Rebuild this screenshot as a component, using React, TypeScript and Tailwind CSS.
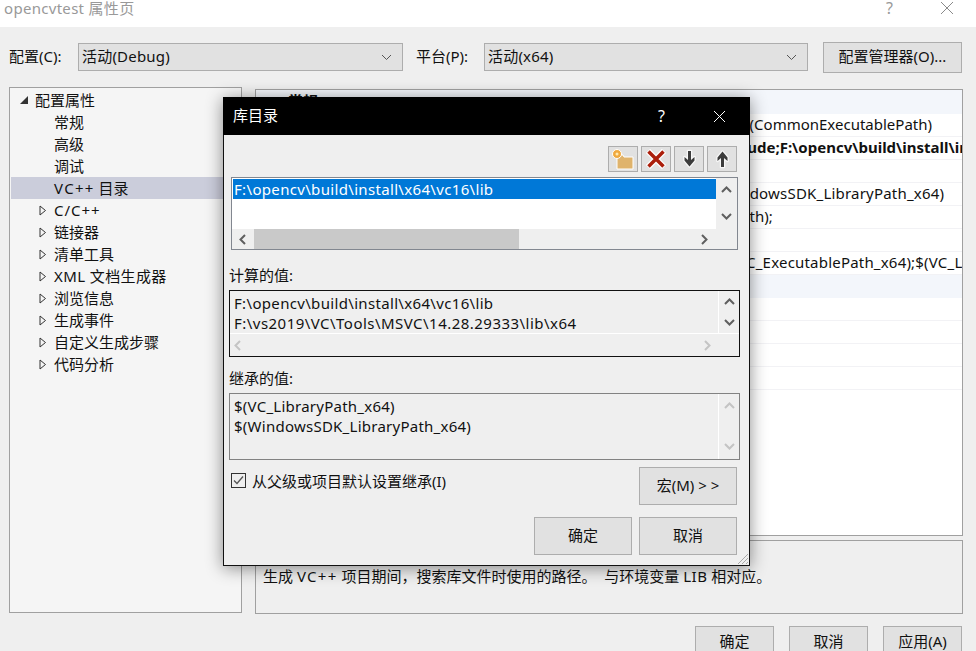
import React from "react";

const treeItems = [
  { label: "C/C++", cls: "tracking-[1px]" },
  { label: "链接器", cls: "" },
  { label: "清单工具", cls: "" },
  { label: "XML 文档生成器", cls: "tracking-[0.4px]" },
  { label: "浏览信息", cls: "" },
  { label: "生成事件", cls: "" },
  { label: "自定义生成步骤", cls: "" },
  { label: "代码分析", cls: "" },
];

const rows = [
  { text: "$(CommonExecutablePath)", cls: "pl-[485px]" },
  { text: "clude;F:\\opencv\\build\\install\\include", cls: "pl-[479px] font-bold" },
  { text: "", cls: "" },
  { text: "WindowsSDK_LibraryPath_x64)", cls: "pl-[466px] tracking-[0.2px]" },
  { text: "Path);", cls: "pl-[476px]" },
  { text: "", cls: "" },
  { text: "VC_ExecutablePath_x64);$(VC_LibraryPath_x64)", cls: "pl-[481px] tracking-[0.2px]" },
];

const Chevron = ({ dir, gray }: { dir: "up" | "down" | "left" | "right"; gray?: boolean }) => {
  const pts = {
    up: "1,7 5.5,2.5 10,7",
    down: "1,3 5.5,7.5 10,3",
    left: "7,1 2.5,5.5 7,10",
    right: "3,1 7.5,5.5 3,10",
  }[dir];
  return (
    <svg width="11" height="11" viewBox="0 0 11 11" fill="none" stroke={gray ? "#c4c4c4" : "#5f5f5f"} strokeWidth="2">
      <polyline points={pts} />
    </svg>
  );
};

const SelectBox = ({ text, cls }: { text: string; cls: string }) => (
  <div className={`h-[28px] border border-[#adadad] bg-[#e1e1e1] flex items-center justify-between pl-[3px] pr-[10px] ${cls}`}>
    <span className="mb-[2px] tracking-[0.2px]">{text}</span>
    <svg width="11" height="7" viewBox="0 0 11 7" fill="none" stroke="#555" strokeWidth="1">
      <polyline points="1,1 5.5,5.5 10,1" />
    </svg>
  </div>
);

const Btn = ({ label, cls }: { label: string; cls: string }) => (
  <div className={`border border-[#adadad] bg-[#e1e1e1] flex items-center justify-center shrink-0 pb-[2px] ${cls}`}>{label}</div>
);

const ToolBtn = ({ children }: { children: React.ReactNode }) => (
  <div className="w-[30px] h-[26px] border border-[#adadad] bg-[#e1e1e1] flex items-center justify-center">{children}</div>
);

const Arrow = ({ up }: { up?: boolean }) => (
  <svg width="15" height="20" viewBox="0 0 15 20" className={up ? "rotate-180" : ""}>
    <path d="M6 2h3v9l3.500-3v3.500L7.500 17.500 2.500 11.500V8L6 11z" fill="#3c3c3c" stroke="#f7f7f7" strokeWidth="2.500" paintOrder="stroke" strokeLinejoin="round" />
  </svg>
);

export default function App() {
  return (
    <div className="relative w-[976px] h-[651px] overflow-hidden bg-[#efefef] text-[15px] leading-[20px] text-[#111] [font-family:'Noto_Sans','Noto_Sans_CJK_SC',sans-serif]">
      {/* title bar */}
      <div className="h-[27px] bg-white flex items-center justify-between pl-[4px] pr-[22px] pb-[12px] text-[#999]">
        <span className="tracking-[0.3px]">opencvtest 属性页</span>
        <div className="flex items-center gap-[47px]">
          <span className="text-[16px]">?</span>
          <svg width="14" height="14" viewBox="0 0 14 14" stroke="#8a8a8a" fill="none">
            <path d="M1 1l12 12M13 1L1 13" />
          </svg>
        </div>
      </div>

      {/* config row */}
      <div className="h-[60px] flex items-center pl-[9px]">
        <span className="w-[69px] mb-[2px]">配置(C):</span>
        <SelectBox text="活动(Debug)" cls="w-[325px]" />
        <span className="ml-[13px] w-[68px] mb-[2px]">平台(P):</span>
        <SelectBox text="活动(x64)" cls="w-[324px]" />
        <Btn label="配置管理器(O)..." cls="ml-[15px] w-[139px] h-[31px]" />
      </div>

      {/* main panels */}
      <div className="flex pl-[9px] gap-[13px] items-start">
        <div className="w-[233px] h-[526px] border border-[#a0a0a0] bg-[#f5f5f5] pl-[1px] pt-[1px] shrink-0">
          <div className="h-[22px] flex items-center pl-[9px] gap-[7px]">
            <span className="w-0 h-0 border-l-[8px] border-l-transparent border-b-[8px] border-b-[#333]" />
            <span>配置属性</span>
          </div>
          {["常规", "高级", "调试"].map((t) => (
            <div key={t} className="h-[22px] flex items-center pl-[43px]">{t}</div>
          ))}
          <div className="h-[22px] flex items-center pl-[43px] bg-[#cbcddb]">
            <span className="tracking-[1.300px]">VC++</span>&nbsp;目录
          </div>
          {treeItems.map((t) => (
            <div key={t.label} className="h-[22px] flex items-center pl-[28px]">
              <svg width="8" height="11" viewBox="0 0 8 11" fill="none" stroke="#333" className="mr-[7px] shrink-0">
                <path d="M1 1l5.500 4.500L1 10z" />
              </svg>
              <span className={t.cls}>{t.label}</span>
            </div>
          ))}
        </div>

        <div className="w-[708px] flex flex-col gap-[4px] mt-[2px] shrink-0">
          <div className="h-[447px] border border-[#a0a0a0] bg-white overflow-hidden">
            <div className="h-[24px] bg-[#f3f6fb] pl-[32px] pt-[1px] font-bold">常规</div>
            {rows.map((r, i) => (
              <div key={i} className={`h-[23px] border-b border-[#f2f2f5] whitespace-nowrap flex items-center overflow-hidden pb-[2px] ${r.cls}`}>
                {r.text}
              </div>
            ))}
            <div className="h-[23px] bg-[#f3f6fb]" />
            {[0, 1, 2, 3].map((i) => (
              <div key={i} className="h-[23px] border-b border-[#f2f2f5]" />
            ))}
          </div>
          <div className="h-[74px] border border-[#a0a0a0] pl-[7px] pt-[25px] whitespace-pre">
            生成 <span className="tracking-[1.300px]">VC++</span> 项目期间，搜索库文件时使用的路径。  与环境变量 <span className="tracking-[0.5px]">LIB</span> 相对应。
          </div>
        </div>
      </div>

      {/* bottom buttons */}
      <div className="flex justify-end gap-[15px] pr-[14px] mt-[12px]">
        <Btn label="确定" cls="w-[79px] h-[32px]" />
        <Btn label="取消" cls="w-[79px] h-[32px]" />
        <Btn label="应用(A)" cls="w-[79px] h-[32px]" />
      </div>

      {/* library directories dialog */}
      <div className="absolute left-[223px] top-[97px] w-[527px] h-[469px] border border-t-0 border-[#111] bg-[#efefef] shadow-[0_2px_16px_rgba(0,0,0,0.45)] flex flex-col">
        <div className="h-[38px] bg-black text-white flex items-center justify-between pl-[10px] pr-[24px] -mx-[1px] shrink-0">
          <span className="mb-[2px]">库目录</span>
          <div className="flex items-center gap-[48px]">
            <span className="text-[16px]">?</span>
            <svg width="13" height="13" viewBox="0 0 13 13" stroke="#fff" fill="none">
              <path d="M1 1l11 11M12 1L1 12" />
            </svg>
          </div>
        </div>

        <div className="flex justify-end gap-[3px] pr-[12px] pt-[11px]">
          <ToolBtn>
            <svg width="24" height="22" viewBox="0 0 24 22">
              <path d="M6 7h6l1 2h9v12H6z" fill="#dfb36c" stroke="#fff" />
              <circle cx="6" cy="6" r="4.500" fill="#f0a93f" stroke="#fff" />
              <circle cx="6" cy="6" r="1.500" fill="#ffe9b0" />
            </svg>
          </ToolBtn>
          <ToolBtn>
            <svg width="22" height="20" viewBox="0 0 22 20" fill="none">
              <path d="M3 2l16 16M19 2L3 18" stroke="#fff" strokeWidth="6" />
              <path d="M3.500 2.500l15 15M18.500 2.500l-15 15" stroke="#ab1f0c" strokeWidth="3.500" />
            </svg>
          </ToolBtn>
          <ToolBtn><Arrow /></ToolBtn>
          <ToolBtn><Arrow up /></ToolBtn>
        </div>

        {/* list box */}
        <div className="ml-[7px] mt-[5px] w-[507px] h-[73px] border border-[#828790] flex flex-col shrink-0 bg-[#efefef]">
          <div className="h-[51px] flex">
            <div className="flex-1 bg-white pl-[1px] pt-[1px]">
              <div className="h-[20px] bg-[#0078d7] text-white pl-[1px] leading-[20px] tracking-[0.33px]">F:\opencv\build\install\x64\vc16\lib</div>
            </div>
            <div className="w-[21px] flex flex-col items-center justify-between py-[7px]">
              <Chevron dir="up" />
              <Chevron dir="down" />
            </div>
          </div>
          <div className="flex-1 flex items-center">
            <div className="w-[22px] flex justify-center"><Chevron dir="left" /></div>
            <div className="w-[265px] h-full bg-[#c9c9c9]" />
            <div className="flex-1 flex justify-end pr-[27px]"><Chevron dir="right" /></div>
          </div>
        </div>

        <div className="ml-[5px] mt-[15px] h-[20px]">计算的值:</div>
        <div className="ml-[5px] mt-[5px] w-[511px] h-[67px] border border-[#111] flex flex-col shrink-0">
          <div className="h-[43px] flex border-b border-white">
            <div className="flex-1 pl-[4px] pt-[2px]">
              <div className="tracking-[0.33px]">F:\opencv\build\install\x64\vc16\lib</div>
              <div className="tracking-[0.47px]">F:\vs2019\VC\Tools\MSVC\14.28.29333\lib\x64</div>
            </div>
            <div className="w-[21px] border-l border-white flex flex-col items-center gap-[9px] pt-[6px]">
              <Chevron dir="up" />
              <Chevron dir="down" />
            </div>
          </div>
          <div className="flex-1 flex items-center justify-between pl-[3px] pr-[26px]">
            <Chevron dir="left" gray />
            <Chevron dir="right" gray />
          </div>
        </div>

        <div className="ml-[5px] mt-[11px] h-[20px]">继承的值:</div>
        <div className="ml-[5px] mt-[5px] w-[511px] h-[67px] border border-[#828282] flex shrink-0">
          <div className="flex-1 pl-[4px] pt-[2px] tracking-[0.25px]">
            <div>$(VC_LibraryPath_x64)</div>
            <div>$(WindowsSDK_LibraryPath_x64)</div>
          </div>
          <div className="w-[21px] border-l border-white flex flex-col items-center justify-between py-[7px]">
            <Chevron dir="up" gray />
            <Chevron dir="down" gray />
          </div>
        </div>

        <div className="flex mt-[7px] pr-[12px] justify-between">
          <div className="flex items-center h-[27px] pl-[7px] gap-[6px]">
            <span className="w-[15px] h-[15px] border border-[#333] flex items-center justify-center">
              <svg width="13" height="13" viewBox="0 0 13 13" fill="none" stroke="#555" strokeWidth="1.300">
                <path d="M2 6.500l3 3 6-7" />
              </svg>
            </span>
            <span>从父级或项目默认设置继承(I)</span>
          </div>
          <Btn label="宏(M) > >" cls="w-[98px] h-[38px]" />
        </div>

        <div className="flex justify-end gap-[7px] pr-[12px] mt-[12px]">
          <Btn label="确定" cls="w-[98px] h-[38px]" />
          <Btn label="取消" cls="w-[98px] h-[38px]" />
        </div>

        {/* resize grip */}
        <svg width="12" height="12" viewBox="0 0 12 12" stroke="#a8a8a8" className="absolute right-0 bottom-0">
          <path d="M1 11L11 1M5 11l6-6M9 11l2-2" />
        </svg>
      </div>
    </div>
  );
}
